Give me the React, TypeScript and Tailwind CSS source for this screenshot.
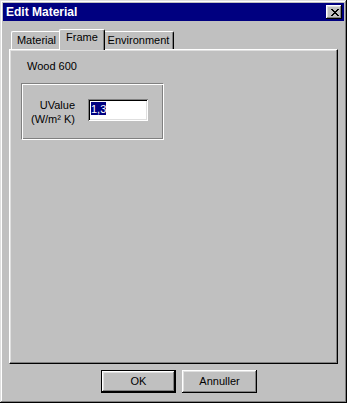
import React from "react";

const raised =
  "shadow-[inset_-1px_-1px_#000,inset_1px_1px_#fff,inset_-2px_-2px_#808080,inset_2px_2px_#dfdfdf]";

function CloseGlyph() {
  const rows = [
    [0, 1, 6, 7],
    [1, 2, 5, 6],
    [2, 3, 4, 5],
    [3, 4],
    [2, 3, 4, 5],
    [1, 2, 5, 6],
    [0, 1, 6, 7],
  ];
  return (
    <svg width="8" height="7" viewBox="0 0 8 7" shapeRendering="crispEdges">
      {rows.map((r, y) =>
        r.map((x) => <rect key={`${x}-${y}`} x={x} y={y} width="1" height="1" fill="#000" />)
      )}
    </svg>
  );
}

export default function App() {
  return (
    <div
      className="w-[347px] h-[403px] bg-[#c0c0c0] p-[3px] flex flex-col shadow-[inset_-1px_-1px_#000,inset_1px_1px_#dfdfdf,inset_-2px_-2px_#808080,inset_2px_2px_#fff] text-black"
      style={{ fontFamily: '"Liberation Sans", Arial, sans-serif' }}
    >
      {/* Title bar */}
      <div className="h-[18px] bg-[#000080] flex items-center justify-between pl-[3px] pr-[2px]">
        <span className="text-white font-bold text-[12px] leading-[14px]">Edit Material</span>
        <div className={`w-[16px] h-[14px] bg-[#c0c0c0] flex items-center justify-center pl-px ${raised}`}>
          <CloseGlyph />
        </div>
      </div>

      <div className="flex flex-col px-[6px] pt-[8px]">
        {/* Tabs */}
        <div className="relative z-10 h-[20px] flex items-end pl-[2px] text-[11px] leading-[13px]">
          <div className="w-[50px] h-[18px] bg-[#c0c0c0] border-l border-t border-white rounded-tl-[2px] rounded-tr-[2px] pt-[2px] text-center">
            Material
          </div>
          <div className="relative z-10 -ml-[2px] w-[46px] h-[21px] -mb-px bg-[#c0c0c0] border-l border-t border-r border-white border-r-black rounded-tl-[2px] rounded-tr-[2px] shadow-[inset_-1px_0_#808080] pt-px text-center">
            Frame
          </div>
          <div className="-ml-[2px] w-[71px] h-[18px] bg-[#c0c0c0] border-l border-t border-r border-white border-r-black rounded-tl-[2px] rounded-tr-[2px] shadow-[inset_-1px_0_#808080] pt-[2px] text-center">
            Environment
          </div>
        </div>

        {/* Panel */}
        <div className="h-[315px] border border-white border-r-black border-b-black shadow-[inset_-1px_-1px_#808080,inset_1px_1px_#dfdfdf] pl-[11px] pt-[10px] text-[11px] leading-[13px]">
          <div className="ml-[6px]">Wood 600</div>

          <div className="mt-[10px] w-[143px] h-[57px] border border-[#808080] border-r-white border-b-white shadow-[inset_1px_1px_#fff,inset_-1px_-1px_#808080] flex items-start pt-[14px]">
            <div className="w-[53px] text-right leading-[14px]">
              <div>UValue</div>
              <div>(W/m² K)</div>
            </div>
            <div className="ml-[13px] mt-px w-[60px] h-[22px] bg-white shadow-[inset_1px_1px_#808080,inset_-1px_-1px_#fff,inset_2px_2px_#000,inset_-2px_-2px_#dfdfdf] pl-[3px] pt-[3px]">
              <span className="inline-block bg-[#000080] text-white leading-[12px] h-[13px] pt-px">1,3</span>
            </div>
          </div>
        </div>

        {/* Buttons */}
        <div className="mt-[6px] flex gap-[6px] pl-[92px] text-[11px]">
          <div className="w-[75px] h-[23px] border border-black">
            <div className={`w-full h-full flex items-center justify-center ${raised}`}>OK</div>
          </div>
          <div className={`w-[75px] h-[23px] flex items-center justify-center ${raised}`}>Annuller</div>
        </div>
      </div>
    </div>
  );
}
